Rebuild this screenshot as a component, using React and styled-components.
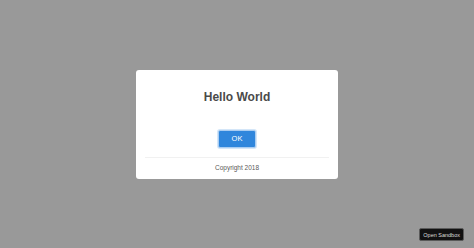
import React from "react";
import styled, { createGlobalStyle } from "styled-components";

const GlobalStyle = createGlobalStyle`
  html, body {
    margin: 0;
    padding: 0;
    height: 100%;
  }
  body {
    font-family: "Liberation Sans", Arial, sans-serif;
  }
`;

export default function App() {
  return (
    <>
      <GlobalStyle />
      <Overlay>
        <Modal>
          <Title>Hello World</Title>
          <Actions>
            <OkButton>OK</OkButton>
          </Actions>
          <Footer>Copyright 2018</Footer>
        </Modal>
      </Overlay>
      <SandboxButton>Open Sandbox</SandboxButton>
    </>
  );
}

const Overlay = styled.div`
  display: flex;
  align-items: center;
  justify-content: center;
  width: 100vw;
  height: 100vh;
  background: #999999;
`;

const Modal = styled.div`
  display: flex;
  flex-direction: column;
  width: 202px;
  height: 109px;
  box-sizing: border-box;
  padding: 0 9px;
  background: #ffffff;
  border-radius: 3px;
`;

const Title = styled.h1`
  margin: 20px 0 0;
  font-size: 12px;
  line-height: 14px;
  font-weight: 700;
  text-align: center;
  color: #4a4a4a;
`;

const Actions = styled.div`
  display: flex;
  justify-content: center;
  margin-top: 26px;
  padding-bottom: 9px;
  border-bottom: 1px solid #f1f1f1;
`;

const OkButton = styled.button`
  width: 38px;
  height: 18px;
  padding: 0;
  border: 1px solid #a9cdf2;
  border-radius: 2px;
  background: #2f86dc;
  color: #ffffff;
  font-family: "Liberation Sans", Arial, sans-serif;
  font-size: 7.5px;
  box-shadow: 0 0 0 1px #d4e6f8;
  cursor: pointer;
`;

const Footer = styled.div`
  padding-top: 5px;
  font-size: 6.5px;
  line-height: 9px;
  text-align: center;
  color: #5a5a5a;
`;

const SandboxButton = styled.button`
  position: fixed;
  right: 10px;
  bottom: 7px;
  height: 13px;
  padding: 0 3px;
  border: 1px solid #5a5a5a;
  border-radius: 2px;
  background: #111111;
  color: #dddddd;
  font-family: "Liberation Sans", Arial, sans-serif;
  font-size: 5.5px;
  cursor: pointer;
`;
